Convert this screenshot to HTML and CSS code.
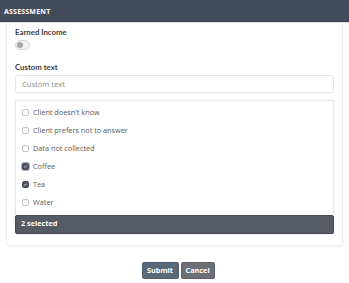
FILE: index.html
```html
<!DOCTYPE html>
<html>
<head>
<meta charset="utf-8">
<link rel="stylesheet" href="styles.css">
</head>
<body>
<div class="hdr">ASSESSMENT</div>
<div class="card">
  <div class="field">
    <div class="lbl">Earned Income</div>
    <span class="toggle"><span class="knob"></span></span>
  </div>
  <div class="field">
    <div class="lbl">Custom text</div>
    <div class="input">Custom text</div>
  </div>
  <div class="panel">
    <ul class="opts">
      <li><span class="cb"></span>Client doesn't know</li>
      <li><span class="cb"></span>Client prefers not to answer</li>
      <li><span class="cb"></span>Data not collected</li>
      <li><span class="cb on focus"><svg viewBox="0 0 8 8"><path d="M2 4.2 L3.4 5.5 L6 2.6" fill="none" stroke="#fff" stroke-width="1.1"/></svg></span>Coffee</li>
      <li><span class="cb on"><svg viewBox="0 0 8 8"><path d="M2 4.2 L3.4 5.5 L6 2.6" fill="none" stroke="#fff" stroke-width="1.1"/></svg></span>Tea</li>
      <li><span class="cb"></span>Water</li>
    </ul>
    <div class="sel">2 selected</div>
  </div>
</div>
<div class="actions">
  <button class="btn submit">Submit</button>
  <button class="btn cancel">Cancel</button>
</div>
</body>
</html>
```
FILE: styles.css
```css
html, body { margin: 0; padding: 0; background: #fff; }
body { font-family: "Open Sans", "Liberation Sans", sans-serif; font-size: 8px; color: #444; width: 349px; height: 283px; overflow: hidden; }
.hdr { height: 23px; background: #434a59; color: #fff; font-weight: 700; font-size: 7px; letter-spacing: 0.2px; line-height: 23px; padding-left: 4px; border-bottom: 1px solid #d9dce0; box-sizing: border-box; }
.card { margin: 0 6px 0 6px; border: 1px solid #efefef; border-top: none; border-radius: 0 0 4px 4px; padding: 4px 8px 11px 8px; box-shadow: 0 1px 3px rgba(0,0,0,0.05); }
.field { display: flex; flex-direction: column; align-items: flex-start; }
.lbl { font-family: "Lato", "Open Sans", sans-serif; font-weight: 700; color: #3b3b3b; font-size: 7.8px; line-height: 10px; }
.toggle { margin-top: 3px; width: 15px; height: 10px; border: 1px solid #d6d6d6; border-radius: 6px; box-sizing: border-box; background: #f1f1f1; display: flex; align-items: center; padding-left: 1px; }
.knob { width: 6px; height: 6px; border-radius: 50%; background: #a5a9b0; }
.field + .field { margin-top: 12px; }
.field:nth-child(2) .lbl { margin-bottom: 3px; }
.input { align-self: stretch; height: 18px; border: 1px solid #e6e6e6; border-radius: 3px; box-sizing: border-box; line-height: 16px; padding-left: 6px; color: #8a8a8a; font-size: 7.6px; box-shadow: 0 1px 1px rgba(0,0,0,0.03); }
.panel { margin-top: 7px; border: 1px solid #e7e7e7; border-radius: 2px; box-shadow: 0 0 3px rgba(0,0,0,0.08); }
.opts { list-style: none; margin: 0; padding: 2px 0 3px 0; }
.opts li { height: 18px; display: flex; align-items: center; padding-left: 6px; color: #5a5a5a; font-size: 7.3px; }
.cb { width: 7px; height: 7px; border: 1px solid #c4c4c4; border-radius: 2px; margin-right: 4px; box-sizing: border-box; display: inline-flex; align-items: center; justify-content: center; background: #fff; }
.cb.on { background: #4a5262; border-color: #4a5262; }
.cb.focus { box-shadow: 0 0 0 1px #aab2c0; }
.cb svg { width: 7px; height: 7px; }
.sel { height: 17px; background: #555a63; border: 1px solid #454a52; border-radius: 2px; color: #fff; font-weight: 700; font-size: 7.3px; line-height: 15px; padding-left: 5px; margin: 1px -1px -1px -1px; }
.actions { display: flex; justify-content: center; gap: 2px; margin-top: 16px; padding-left: 7px; }
.btn { font-family: inherit; font-size: 7.3px; font-weight: 700; color: #fff; border: 1px solid rgba(0,0,0,0.1); border-radius: 2px; height: 17px; padding: 0 4px; line-height: 15px; }
.submit { background: #5a6a7b; width: 37px; }
.cancel { background: #6c6f73; width: 34px; }
```
